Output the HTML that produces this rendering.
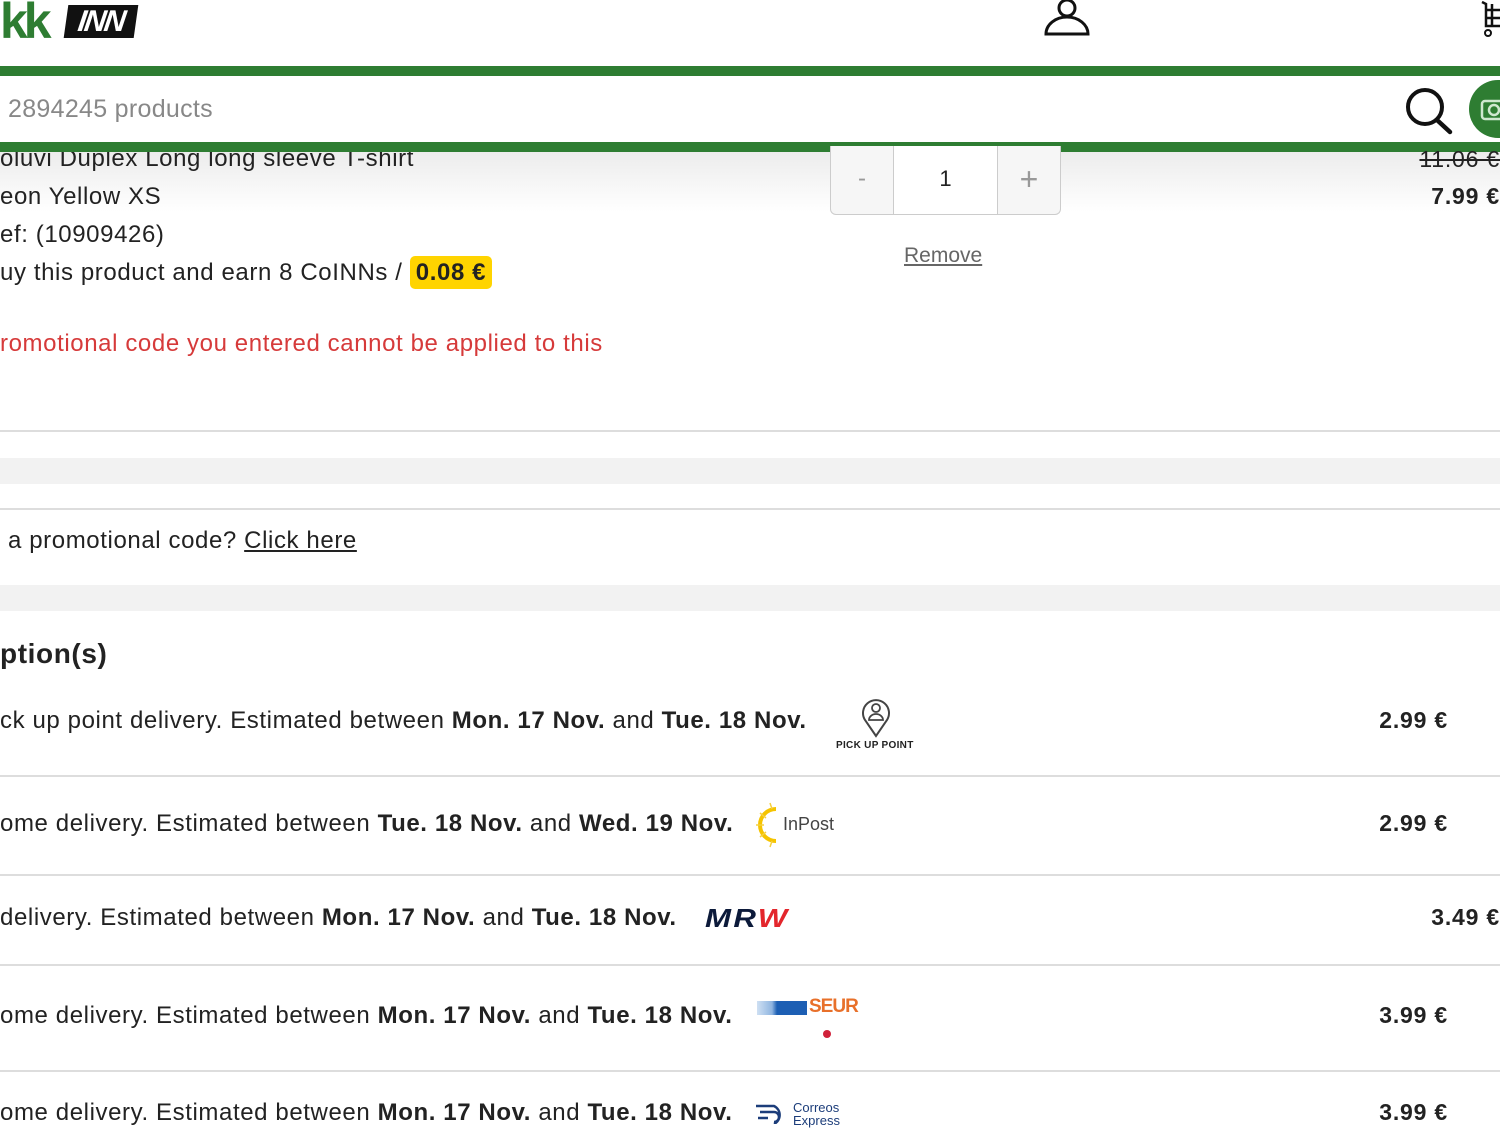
<!DOCTYPE html>
<html><head><meta charset="utf-8"><style>
*{margin:0;padding:0;box-sizing:border-box}
body{width:1500px;height:1124px;overflow:hidden;background:#fff;font-family:"Liberation Sans",sans-serif;color:#222;position:relative}
.a{position:absolute;white-space:nowrap}
.t{font-size:24px;line-height:28px;letter-spacing:0.6px}
.g{background:#2e7d32;position:absolute;left:0;width:1500px;height:10px}
.hr{position:absolute;left:0;width:1500px;height:2px;background:#ddd}
.gs{position:absolute;left:0;width:1500px;background:#f2f2f2}
b{font-weight:bold}
.pr{font-weight:bold;font-size:23px;text-align:right;letter-spacing:0.8px}
</style></head><body>
<div class="a" style="left:0;top:-4px;font:bold 50px/50px 'Liberation Sans',sans-serif;color:#2e7d32;letter-spacing:-4px">kk</div>
<div class="a" style="left:66px;top:5px;width:70px;height:33px;background:#111;transform:skewX(-8deg);color:#fff;font:bold italic 30px/33px 'Liberation Sans',sans-serif;text-align:center;letter-spacing:-2px">INN</div>
<svg class="a" style="left:1043px;top:0" width="48" height="36" viewBox="0 0 48 36"><circle cx="24" cy="8" r="8" fill="none" stroke="#111" stroke-width="3"/><path d="M3 34 A21 17 0 0 1 45 34 Z" fill="none" stroke="#111" stroke-width="3"/></svg>
<svg class="a" style="left:1480px;top:0" width="20" height="38" viewBox="0 0 20 38"><path d="M2 2 L6 4 L6 26 L20 26 M6 10 L20 10 M6 18 L20 18 M12 4 L12 26" fill="none" stroke="#111" stroke-width="2.5"/><circle cx="8" cy="33" r="3" fill="none" stroke="#111" stroke-width="2"/></svg>
<div class="g" style="top:66px"></div>
<div class="a" style="left:8px;top:94px;font-size:25px;line-height:30px;color:#888;letter-spacing:0.3px">2894245 products</div>
<svg class="a" style="left:1402px;top:84px" width="52" height="52" viewBox="0 0 52 52"><circle cx="23" cy="23" r="17" fill="none" stroke="#111" stroke-width="4"/><path d="M35 36 L48 48" stroke="#111" stroke-width="4.5" stroke-linecap="round"/></svg>
<div class="a" style="left:1469px;top:80px;width:60px;height:58px;border-radius:30px;background:#2e7d32"></div>
<svg class="a" style="left:1480px;top:95px" width="20" height="28" viewBox="0 0 20 28"><rect x="2" y="6" width="24" height="18" rx="3" fill="none" stroke="#cfe8cf" stroke-width="2.5"/><circle cx="14" cy="15" r="5" fill="none" stroke="#cfe8cf" stroke-width="2.5"/></svg>
<div class="g" style="top:142px"></div>
<div class="a" style="left:0;top:152px;width:1500px;height:60px;background:linear-gradient(#ececec,#fff)"></div>
<div class="a t" style="left:0;top:145px;clip-path:inset(7px 0 0 0)">oluvi Duplex Long long sleeve T-shirt</div>
<div class="a t" style="left:0;top:183px">eon Yellow XS</div>
<div class="a t" style="left:0;top:221px">ef: (10909426)</div>
<div class="a t" style="left:0;top:259px">uy this product and earn 8 CoINNs / <span style="background:#ffd400;font-weight:bold;padding:3px 6px;border-radius:5px">0.08 €</span></div>
<div class="a t" style="left:0;top:330px;color:#d63a3a">romotional code you entered cannot be applied to this</div>
<div class="a" style="left:830px;top:146px;width:231px;height:69px;border:1px solid #ccc;border-top:none;border-radius:0 0 6px 6px;background:#f6f6f6;display:flex">
<div style="width:63px;border-right:1px solid #ccc;text-align:center;font-size:24px;line-height:66px;color:#999">-</div>
<div style="width:104px;border-right:1px solid #ccc;background:#fff;text-align:center;font-size:22px;line-height:66px">1</div>
<div style="flex:1;text-align:center;font-size:32px;line-height:66px;color:#999;font-weight:300">+</div></div>
<div class="a" style="left:904px;top:244px;font-size:21px;color:#666;text-decoration:underline">Remove</div>
<div class="a pr" style="right:0;top:146px;text-decoration:line-through;font-weight:normal;clip-path:inset(5px 0 0 0)">11.06 €</div>
<div class="a pr" style="right:0;top:183px">7.99 €</div>
<div class="hr" style="top:430px"></div>
<div class="gs" style="top:458px;height:26px"></div>
<div class="hr" style="top:508px"></div>
<div class="a t" style="left:8px;top:527px"> a promotional code? <span style="text-decoration:underline">Click here</span></div>
<div class="gs" style="top:585px;height:26px"></div>
<div class="a" style="left:0;top:637px;font-size:28px;font-weight:bold;line-height:34px;letter-spacing:0.6px">ption(s)</div>
<div class="a t" style="left:0;top:707px">ck up point delivery. Estimated between <b>Mon. 17 Nov.</b> and <b>Tue. 18 Nov.</b></div>
<svg class="a" style="left:860px;top:696px" width="32" height="42" viewBox="0 0 32 42"><path d="M16 40 L5 24 A13 13 0 1 1 27 24 Z" fill="none" stroke="#444" stroke-width="2"/><circle cx="16" cy="12" r="4" fill="none" stroke="#444" stroke-width="1.8"/><path d="M9 24 A7 6 0 0 1 23 24 Z" fill="none" stroke="#444" stroke-width="1.8"/></svg>
<div class="a" style="left:836px;top:740px;font-size:10px;font-weight:bold;letter-spacing:0.3px">PICK UP POINT</div>
<div class="a pr" style="right:52px;top:707px">2.99 €</div>
<div class="hr" style="top:775px"></div>
<div class="a t" style="left:0;top:810px">ome delivery. Estimated between <b>Tue. 18 Nov.</b> and <b>Wed. 19 Nov.</b></div>
<svg class="a" style="left:754px;top:801px" width="30" height="48" viewBox="0 0 30 48"><path d="M22 8 A16 16 0 0 0 22 40" fill="none" stroke="#f5c400" stroke-width="4"/><path d="M2 24 H10 M6 12 L12 17 M6 36 L12 31 M16 2 L18 8 M16 46 L18 40" stroke="#f5d040" stroke-width="1.5"/></svg>
<div class="a" style="left:783px;top:814px;font-size:18px;color:#444">InPost</div>
<div class="a pr" style="right:52px;top:810px">2.99 €</div>
<div class="hr" style="top:874px"></div>
<div class="a t" style="left:0;top:904px">delivery. Estimated between <b>Mon. 17 Nov.</b> and <b>Tue. 18 Nov.</b></div>
<div class="a" style="left:705px;top:904px;font:bold italic 26px/28px 'Liberation Sans',sans-serif;color:#0c1a3a;letter-spacing:2px;transform:scaleX(1.2);transform-origin:left">MR<span style="color:#e3262c">W</span></div>
<div class="a pr" style="right:0;top:904px">3.49 €</div>
<div class="hr" style="top:964px"></div>
<div class="a t" style="left:0;top:1002px">ome delivery. Estimated between <b>Mon. 17 Nov.</b> and <b>Tue. 18 Nov.</b></div>
<div class="a" style="left:757px;top:1001px;width:50px;height:14px;background:linear-gradient(90deg,#cfe0f3 0,#8fb5e0 30%,#1d5fb4 40%)"></div>
<div class="a" style="left:809px;top:996px;font-size:19px;font-weight:bold;color:#e8702a;letter-spacing:-1px">SEUR</div>
<div class="a" style="left:823px;top:1030px;width:8px;height:8px;border-radius:4px;background:#d0213a"></div>
<div class="a pr" style="right:52px;top:1002px">3.99 €</div>
<div class="hr" style="top:1070px"></div>
<div class="a t" style="left:0;top:1099px">ome delivery. Estimated between <b>Mon. 17 Nov.</b> and <b>Tue. 18 Nov.</b></div>
<svg class="a" style="left:754px;top:1098px" width="36" height="26" viewBox="0 0 36 26"><path d="M2 8 H20 A10 10 0 0 1 20 26 M6 14 H20 A5 5 0 0 1 20 24 M4 20 H14" fill="none" stroke="#1c3d7a" stroke-width="2.5"/></svg>
<div class="a" style="left:793px;top:1101px;font-size:13px;line-height:13px;color:#1c3d7a">Correos<br>Express</div>
<div class="a pr" style="right:52px;top:1099px">3.99 €</div>
</body></html>
